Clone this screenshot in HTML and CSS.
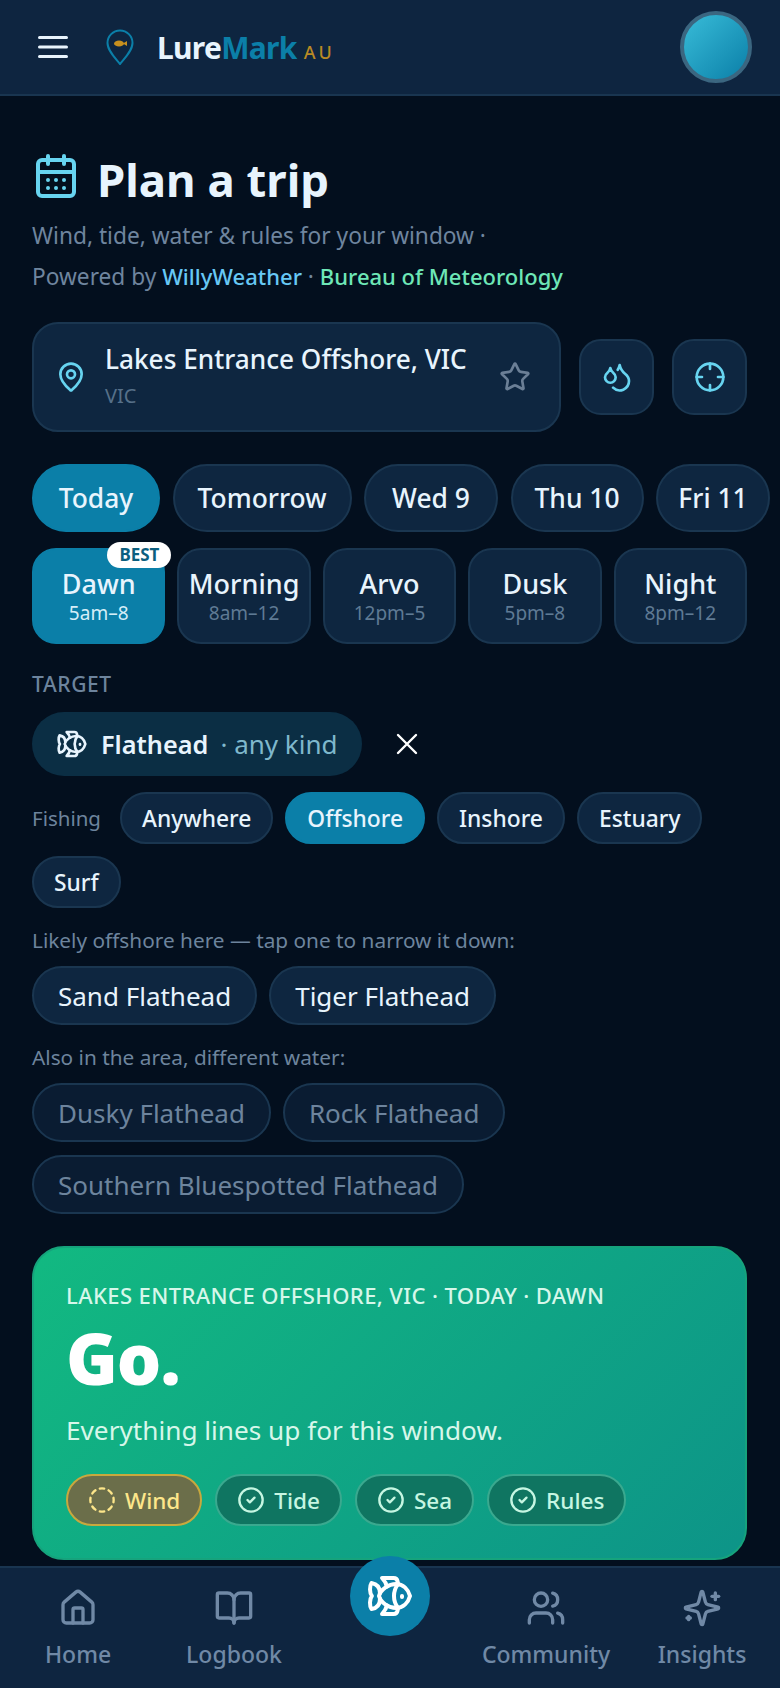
FILE: index.html
```html
<!DOCTYPE html>
<html lang="en">
<head>
  <meta charset="UTF-8" />
  <meta name="viewport" content="width=device-width, initial-scale=1.0"/>
  <title>LureMark AU - Plan a trip</title>
  <link rel="stylesheet" href="styles.css">
</head>
<body>

  <svg class="sprite" xmlns="http://www.w3.org/2000/svg">
    <symbol id="i-fish" viewBox="0 0 24 24">
      <path d="M6.5 12c.94-3.46 4.94-6 8.5-6 3.56 0 6.06 2.54 7 6-.94 3.47-3.44 6-7 6s-7.56-2.53-8.5-6Z"/>
      <path d="M18 12v.5"/>
      <path d="M16 17.93a9.77 9.77 0 0 1 0-11.86"/>
      <path d="M7 10.67C7 8 5.58 5.97 2.73 5.5c-1 1.5-1 5 .23 6.5-1.24 1.5-1.24 5-.23 6.5C5.58 18.03 7 16 7 13.33"/>
      <path d="M10.46 7.26C10.2 5.88 9.17 4.24 8 3h5.8a2 2 0 0 1 1.98 1.67l.23 1.4"/>
      <path d="m16.01 17.93-.23 1.4A2 2 0 0 1 13.8 21H8c1.17-1.24 2.2-2.88 2.46-4.26"/>
    </symbol>
    <symbol id="i-check" viewBox="0 0 24 24">
      <circle cx="12" cy="12" r="10"/>
      <path d="m9 12 2 2 4-4"/>
    </symbol>
  </svg>

  <div class="app">
    <header class="topbar">
      <svg class="menu-icon" viewBox="0 0 30 24" fill="none" stroke="currentColor" stroke-width="3" stroke-linecap="round">
        <path d="M2 2.500h27M2 12h27M2 21.500h27"/>
      </svg>
      <svg class="logo-pin" viewBox="0 0 28 36" fill="none">
        <path d="M14 35C9 29 1.500 21.500 1.500 14a12.500 12.500 0 0 1 25 0C26.500 21.500 19 29 14 35Z" stroke="#0b7fa8" stroke-width="2"/>
        <ellipse cx="13" cy="14.500" rx="5" ry="3" fill="#c8901e"/>
        <path d="M17 14.500l4-2.500v5z" fill="#c8901e"/>
      </svg>
      <div class="logo-text"><span class="lure">Lure</span><span class="mark">Mark</span><span class="au">AU</span></div>
      <div class="avatar"></div>
    </header>

    <main class="content">
      <div class="title-row">
        <svg class="title-icon" viewBox="0 0 24 24" fill="none" stroke="currentColor" stroke-width="2" stroke-linecap="round" stroke-linejoin="round">
          <path d="M8 2v4"/><path d="M16 2v4"/>
          <rect width="18" height="18" x="3" y="4" rx="2"/>
          <path d="M3 10h18"/>
          <path d="M8 14h.01"/><path d="M12 14h.01"/><path d="M16 14h.01"/>
          <path d="M8 18h.01"/><path d="M12 18h.01"/><path d="M16 18h.01"/>
        </svg>
        <h1>Plan a trip</h1>
      </div>
      <p class="subtitle">Wind, tide, water &amp; rules for your window ·<br>Powered by <span class="willy">WillyWeather</span> · <span class="bom">Bureau of Meteorology</span></p>

      <div class="location-row">
        <div class="location-card">
          <svg class="loc-pin" viewBox="0 0 24 24" fill="none" stroke="currentColor" stroke-width="2" stroke-linecap="round" stroke-linejoin="round">
            <path d="M20 10c0 4.993-5.539 10.193-7.399 11.799a1 1 0 0 1-1.202 0C9.539 20.193 4 14.993 4 10a8 8 0 0 1 16 0"/>
            <circle cx="12" cy="10" r="3"/>
          </svg>
          <div class="loc-text">
            <div class="loc-name">Lakes Entrance Offshore, VIC</div>
            <div class="loc-sub">VIC</div>
          </div>
          <svg class="star" viewBox="0 0 24 24" fill="none" stroke="currentColor" stroke-width="2" stroke-linecap="round" stroke-linejoin="round">
            <path d="M11.525 2.295a.53.53 0 0 1 .95 0l2.31 4.679a2.123 2.123 0 0 0 1.595 1.16l5.166.756a.53.53 0 0 1 .294.904l-3.736 3.638a2.123 2.123 0 0 0-.611 1.878l.882 5.14a.53.53 0 0 1-.771.56l-4.618-2.428a2.122 2.122 0 0 0-1.973 0L6.396 21.01a.53.53 0 0 1-.77-.56l.881-5.139a2.122 2.122 0 0 0-.611-1.879L2.16 9.795a.53.53 0 0 1 .294-.906l5.165-.755a2.122 2.122 0 0 0 1.597-1.16z"/>
          </svg>
        </div>
        <div class="square-btn">
          <svg viewBox="0 0 24 24" fill="none" stroke="currentColor" stroke-width="2" stroke-linecap="round" stroke-linejoin="round">
            <path d="M7 16.300c2.200 0 4-1.830 4-4.050 0-1.160-.57-2.260-1.710-3.190S7.290 6.750 7 5.300c-.29 1.450-1.140 2.840-2.290 3.760S3 11.100 3 12.250c0 2.220 1.800 4.050 4 4.050z"/>
            <path d="M12.560 6.600A10.970 10.970 0 0 0 14 3.020c.5 2.500 2 4.900 4 6.500s3 3.500 3 5.500a6.980 6.980 0 0 1-11.910 4.970"/>
          </svg>
        </div>
        <div class="square-btn">
          <svg viewBox="0 0 24 24" fill="none" stroke="currentColor" stroke-width="2" stroke-linecap="round" stroke-linejoin="round">
            <circle cx="12" cy="12" r="10"/>
            <path d="M22 12h-4M6 12H2M12 6V2M12 22v-4"/>
          </svg>
        </div>
      </div>

      <div class="day-row">
        <div class="day-pill active">Today</div>
        <div class="day-pill">Tomorrow</div>
        <div class="day-pill">Wed 9</div>
        <div class="day-pill">Thu 10</div>
        <div class="day-pill">Fri 11</div>
      </div>

      <div class="period-row">
        <div class="period active"><span class="best">BEST</span><div class="period-name">Dawn</div><div class="period-time">5am–8</div></div>
        <div class="period"><div class="period-name">Morning</div><div class="period-time">8am–12</div></div>
        <div class="period"><div class="period-name">Arvo</div><div class="period-time">12pm–5</div></div>
        <div class="period"><div class="period-name">Dusk</div><div class="period-time">5pm–8</div></div>
        <div class="period"><div class="period-name">Night</div><div class="period-time">8pm–12</div></div>
      </div>

      <div class="section-label">TARGET</div>
      <div class="target-row">
        <div class="target-chip">
          <svg class="stroke-icon"><use href="#i-fish"/></svg>
          <span class="target-name">Flathead</span>
          <span class="target-any">· any kind</span>
        </div>
        <svg class="close-icon" viewBox="0 0 20 20" fill="none" stroke="currentColor" stroke-width="2" stroke-linecap="round">
          <path d="M2.500 2.500l15 15M17.500 2.500l-15 15"/>
        </svg>
      </div>

      <div class="fishing-row">
        <span class="fishing-label">Fishing</span>
        <div class="small-pill">Anywhere</div>
        <div class="small-pill active">Offshore</div>
        <div class="small-pill">Inshore</div>
        <div class="small-pill">Estuary</div>
        <div class="small-pill">Surf</div>
      </div>

      <p class="hint">Likely offshore here — tap one to narrow it down:</p>
      <div class="species-row">
        <div class="species">Sand Flathead</div>
        <div class="species">Tiger Flathead</div>
      </div>

      <p class="hint">Also in the area, different water:</p>
      <div class="species-row">
        <div class="species dim">Dusky Flathead</div>
        <div class="species dim">Rock Flathead</div>
        <div class="species dim">Southern Bluespotted Flathead</div>
      </div>

      <section class="verdict">
        <div class="verdict-where">LAKES ENTRANCE OFFSHORE, VIC · TODAY · DAWN</div>
        <div class="verdict-go">Go.</div>
        <div class="verdict-text">Everything lines up for this window.</div>
        <div class="check-row">
          <div class="check warn">
            <svg viewBox="0 0 24 24" fill="none" stroke="currentColor" stroke-width="2" stroke-linecap="round">
              <path d="M10.100 2.182a10 10 0 0 1 3.800 0"/>
              <path d="M13.900 21.818a10 10 0 0 1-3.800 0"/>
              <path d="M17.609 3.721a10 10 0 0 1 2.690 2.700"/>
              <path d="M2.182 13.900a10 10 0 0 1 0-3.800"/>
              <path d="M20.279 17.609a10 10 0 0 1-2.700 2.690"/>
              <path d="M21.818 10.100a10 10 0 0 1 0 3.800"/>
              <path d="M3.721 6.391a10 10 0 0 1 2.700-2.690"/>
              <path d="M6.391 20.279a10 10 0 0 1-2.690-2.700"/>
            </svg>
            Wind
          </div>
          <div class="check"><svg class="stroke-icon"><use href="#i-check"/></svg>Tide</div>
          <div class="check"><svg class="stroke-icon"><use href="#i-check"/></svg>Sea</div>
          <div class="check"><svg class="stroke-icon"><use href="#i-check"/></svg>Rules</div>
        </div>
      </section>
    </main>

    <nav class="bottom-nav">
      <div class="nav-item">
        <svg viewBox="0 0 24 24" fill="none" stroke="currentColor" stroke-width="2" stroke-linecap="round" stroke-linejoin="round">
          <path d="M15 21v-8a1 1 0 0 0-1-1h-4a1 1 0 0 0-1 1v8"/>
          <path d="M3 10a2 2 0 0 1 .709-1.528l7-5.999a2 2 0 0 1 2.582 0l7 5.999A2 2 0 0 1 21 10v9a2 2 0 0 1-2 2H5a2 2 0 0 1-2-2z"/>
        </svg>
        <span>Home</span>
      </div>
      <div class="nav-item">
        <svg viewBox="0 0 24 24" fill="none" stroke="currentColor" stroke-width="2" stroke-linecap="round" stroke-linejoin="round">
          <path d="M12 7v14"/>
          <path d="M3 18a1 1 0 0 1-1-1V4a1 1 0 0 1 1-1h5a4 4 0 0 1 4 4 4 4 0 0 1 4-4h5a1 1 0 0 1 1 1v13a1 1 0 0 1-1 1h-6a3 3 0 0 0-3 3 3 3 0 0 0-3-3z"/>
        </svg>
        <span>Logbook</span>
      </div>
      <div class="nav-item nav-spacer"></div>
      <div class="nav-item">
        <svg viewBox="0 0 24 24" fill="none" stroke="currentColor" stroke-width="2" stroke-linecap="round" stroke-linejoin="round">
          <path d="M16 21v-2a4 4 0 0 0-4-4H6a4 4 0 0 0-4 4v2"/>
          <circle cx="9" cy="7" r="4"/>
          <path d="M22 21v-2a4 4 0 0 0-3-3.870"/>
          <path d="M16 3.130a4 4 0 0 1 0 7.750"/>
        </svg>
        <span>Community</span>
      </div>
      <div class="nav-item">
        <svg viewBox="0 0 24 24" fill="none" stroke="currentColor" stroke-width="2" stroke-linecap="round" stroke-linejoin="round">
          <path d="M9.937 15.500A2 2 0 0 0 8.500 14.063l-6.135-1.582a.5.5 0 0 1 0-.962L8.500 9.936A2 2 0 0 0 9.937 8.500l1.582-6.135a.5.5 0 0 1 .963 0L14.063 8.500A2 2 0 0 0 15.500 9.937l6.135 1.581a.5.5 0 0 1 0 .964L15.500 14.063a2 2 0 0 0-1.437 1.437l-1.582 6.135a.5.5 0 0 1-.963 0z"/>
          <path d="M20 3v4"/><path d="M22 5h-4"/><path d="M4 17v2"/><path d="M5 18H3"/>
        </svg>
        <span>Insights</span>
      </div>
      <div class="fab"><svg class="stroke-icon"><use href="#i-fish"/></svg></div>
    </nav>
  </div>

</body>
</html>
```

FILE: styles.css
```css
* {
  box-sizing: border-box;
}

html, body {
  margin: 0;
  height: 100%;
}

body {
  font-family: "Noto Sans", "Open Sans", sans-serif;
  background: #030f1e;
  color: #e8f4fd;
}

p {
  margin: 0;
}

.sprite {
  display: none;
}

.stroke-icon {
  fill: none;
  stroke: currentColor;
  stroke-width: 2;
  stroke-linecap: round;
  stroke-linejoin: round;
}

.app {
  display: flex;
  flex-direction: column;
  height: 1688px;
  overflow: hidden;
}

/* top bar */
.topbar {
  display: flex;
  align-items: center;
  flex: none;
  height: 96px;
  padding: 0 28px 0 37px;
  background: #0e2540;
  border-bottom: 2px solid #193550;
}

.menu-icon {
  width: 31px;
  height: 24px;
  color: #e8f4fd;
}

.logo-pin {
  width: 28px;
  height: 36px;
  margin-left: 38px;
}

.logo-text {
  display: flex;
  align-items: baseline;
  margin-left: 23px;
  font-size: 30px;
  font-weight: 700;
  letter-spacing: -0.7px;
}

.lure {
  color: #e8f4fd;
}

.mark {
  color: #0b7fa8;
}

.au {
  margin-left: 7px;
  font-size: 18px;
  font-weight: 500;
  letter-spacing: 3px;
  color: #b98a24;
}

.avatar {
  width: 72px;
  height: 72px;
  margin-left: auto;
  border-radius: 50%;
  border: 4px solid #3b6680;
  background: linear-gradient(135deg, #38bcd8, #0b7fa8);
}

/* main column */
.content {
  flex: 1;
  min-height: 0;
  padding: 58px 33px 0 32px;
}

.title-row {
  display: flex;
  align-items: center;
  gap: 17px;
  height: 50px;
}

.title-icon {
  width: 48px;
  height: 48px;
  margin-bottom: 6px;
  color: #67d4f0;
}

h1 {
  margin: 0;
  font-size: 45.5px;
  font-weight: 700;
  line-height: 50px;
  color: #e8f4fd;
}

.subtitle {
  margin-top: 12px;
  font-size: 22.7px;
  line-height: 40px;
  color: #6f859f;
}

.willy {
  color: #67c8f5;
  font-size: 22px;
  font-weight: 500;
}

.bom {
  color: #6ee7b7;
  font-size: 22px;
  font-weight: 500;
}

.location-row {
  display: flex;
  align-items: center;
  gap: 18px;
  margin-top: 25px;
}

.location-card {
  display: flex;
  align-items: center;
  width: 531px;
  height: 110px;
  padding: 0 28px 0 21px;
  background: #0e2640;
  border: 2px solid #1a3650;
  border-radius: 26px;
}

.loc-pin {
  flex: none;
  width: 32px;
  height: 32px;
  color: #67d4f0;
}

.loc-text {
  flex: 1;
  margin-left: 18px;
  min-width: 0;
}

.loc-name {
  font-size: 26.2px;
  font-weight: 500;
  line-height: 36px;
  white-space: nowrap;
  margin-top: -4px;
}

.loc-sub {
  margin-top: 6px;
  font-size: 20px;
  line-height: 26px;
  color: #567089;
}

.star {
  flex: none;
  width: 32px;
  height: 32px;
  color: #6b7f96;
}

.square-btn {
  display: flex;
  align-items: center;
  justify-content: center;
  width: 75px;
  height: 76px;
  background: #0e2640;
  border: 2px solid #1a3650;
  border-radius: 22px;
  color: #67d4f0;
}

.square-btn svg {
  width: 32px;
  height: 32px;
}

.day-row {
  display: grid;
  grid-template-columns: 128px 179px 134px 133px 114px;
  gap: 12.5px;
  margin-top: 32px;
  white-space: nowrap;
}

.day-pill {
  display: flex;
  align-items: center;
  justify-content: center;
  height: 68px;
  font-size: 26.4px;
  font-weight: 500;
  background: #0e2640;
  border: 2px solid #1a3650;
  border-radius: 34px;
}

.day-pill.active {
  background: #0b7fa8;
  border-color: #0b7fa8;
}

.period-row {
  display: grid;
  grid-template-columns: repeat(5, 1fr);
  gap: 12px;
  margin-top: 16px;
}

.period {
  position: relative;
  height: 96px;
  padding-top: 17px;
  text-align: center;
  background: #0e2640;
  border: 2px solid #1a3650;
  border-radius: 24px;
}

.period.active {
  background: #0b7fa8;
  border-color: #0b7fa8;
}

.period-name {
  font-size: 27px;
  font-weight: 500;
  line-height: 34px;
}

.period-time {
  font-size: 19px;
  line-height: 24px;
  color: #5f7a94;
}

.period.active .period-time {
  color: #d5eef8;
}

.best {
  position: absolute;
  top: -8px;
  right: -8px;
  padding: 0 12px;
  font-size: 17px;
  font-weight: 700;
  line-height: 26px;
  color: #0b5f80;
  background: #fff;
  border-radius: 14px;
}

.section-label {
  margin-top: 26px;
  font-size: 21px;
  font-weight: 500;
  letter-spacing: 0.6px;
  line-height: 28px;
  color: #6d849d;
}

.target-row {
  display: flex;
  align-items: center;
  margin-top: 14px;
}

.target-chip {
  display: flex;
  align-items: center;
  height: 64px;
  padding: 0 25px 0 24px;
  background: #0b2e44;
  border-radius: 32px;
}

.target-chip svg {
  width: 32px;
  height: 32px;
}

.target-name {
  margin-left: 13px;
  font-size: 25.3px;
  font-weight: 600;
}

.target-any {
  margin-left: 12px;
  font-size: 26px;
  color: #7fb8cc;
}

.close-icon {
  width: 24px;
  height: 24px;
  margin-left: 33px;
  color: #fff;
}

.fishing-row {
  display: flex;
  flex-wrap: wrap;
  align-items: center;
  gap: 12px;
  margin-top: 16px;
}

.fishing-label {
  margin-right: 7px;
  font-size: 20.5px;
  color: #6d849d;
}

.small-pill {
  display: flex;
  align-items: center;
  height: 52px;
  padding: 0 20px;
  font-size: 22.8px;
  font-weight: 500;
  background: #0e2640;
  border: 2px solid #1a3650;
  border-radius: 26px;
}

.small-pill.active {
  background: #0b7fa8;
  border-color: #0b7fa8;
}

.hint {
  margin-top: 18px;
  font-size: 20.8px;
  line-height: 28px;
  color: #6d849d;
}

.species-row {
  display: flex;
  flex-wrap: wrap;
  gap: 13px 12px;
  margin-top: 12px;
}

.species {
  display: flex;
  align-items: center;
  height: 59px;
  padding: 0 24px;
  font-size: 26px;
  background: #0e2640;
  border: 2px solid #1a3650;
  border-radius: 30px;
}

.species.dim {
  color: #6d849d;
  background: #0a1c32;
}

.verdict {
  height: 314px;
  margin-top: 32px;
  padding: 32px 32px 0;
  background: linear-gradient(135deg, #12b981, #0d9488);
  border: 2px solid #16a37c;
  border-radius: 32px;
}

.verdict-where {
  font-size: 22px;
  font-weight: 500;
  letter-spacing: 0.4px;
  line-height: 30px;
  color: #d6f7ea;
}

.verdict-go {
  margin-top: 10px;
  font-size: 70px;
  font-weight: 900;
  line-height: 76px;
  letter-spacing: -1px;
  color: #fff;
}

.verdict-text {
  margin-top: 16px;
  font-size: 26.2px;
  line-height: 36px;
  color: #d6f7ea;
}

.check-row {
  display: flex;
  gap: 13px;
  margin-top: 26px;
}

.check {
  display: flex;
  align-items: center;
  gap: 9px;
  height: 52px;
  padding: 0 20px;
  font-size: 22.5px;
  font-weight: 500;
  color: #c6f6e2;
  background: #0f7561;
  border: 2px solid #3aa98f;
  border-radius: 26px;
}

.check svg {
  width: 28px;
  height: 28px;
}

.check.warn {
  color: #fde68a;
  background: #6b6e4a;
  border-color: #c8a83e;
}

/* bottom nav */
.bottom-nav {
  position: relative;
  display: flex;
  flex: none;
  height: 122px;
  background: #0e2540;
  border-top: 2px solid #193550;
}

.nav-item {
  flex: 1;
  display: flex;
  flex-direction: column;
  align-items: center;
  padding-top: 20px;
  color: #7089a6;
  font-size: 23px;
  font-weight: 500;
}

.nav-item svg {
  width: 40px;
  height: 40px;
}

.nav-item span {
  margin-top: 10px;
}

.fab {
  position: absolute;
  left: 350px;
  top: -12px;
  display: flex;
  align-items: center;
  justify-content: center;
  width: 80px;
  height: 80px;
  color: #fff;
  background: #0b7fa8;
  border-radius: 50%;
}

.fab svg {
  width: 48px;
  height: 48px;
}
```
